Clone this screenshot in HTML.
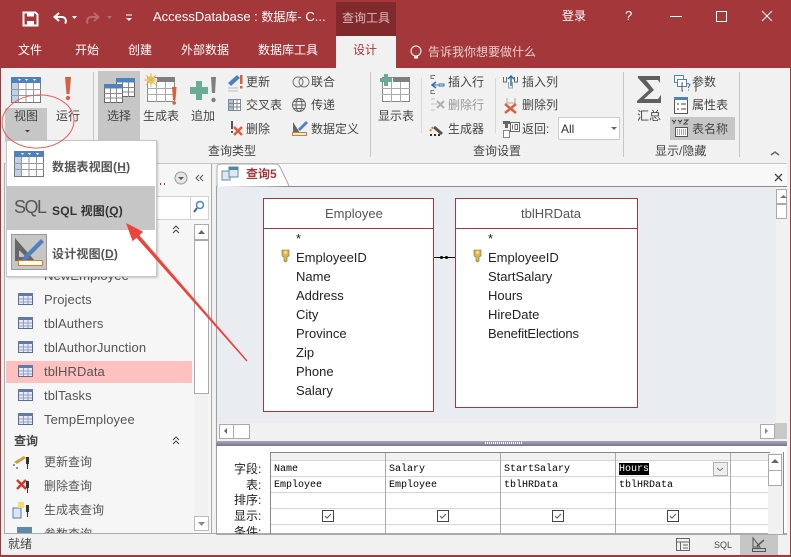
<!DOCTYPE html>
<html lang="zh"><head><meta charset="utf-8"><title>Access</title>
<style>
html,body{margin:0;padding:0}
body{width:791px;height:557px;overflow:hidden;position:relative;background:#f1f1f1;font-family:"Liberation Sans","Noto Sans CJK SC",sans-serif;font-size:12px;color:#444}
.r{position:absolute}
.t{position:absolute;white-space:nowrap;line-height:16px;font-size:12px;color:#444}
.w{color:#fff}
.f{font-size:13px;color:#222;line-height:19px}
.n{font-size:13px;color:#555;letter-spacing:.1px}
.m{font-family:"Liberation Mono",monospace;font-size:10px;color:#000;line-height:12px}
.g{color:#999}
svg{position:absolute;left:0;top:0}
</style></head><body>
<!-- title -->
<div class="r" style="left:0;top:0;width:791px;height:68px;background:#A4373A"></div>
<div class="r" style="left:336px;top:2px;width:60px;height:34px;background:#812A2D"></div>
<div class="r" style="left:336px;top:36px;width:60px;height:32px;background:#f1f1f1"></div>
<span class="t w" style="left:153px;top:9px;font-size:13px">AccessDatabase : <span style="font-size:12px">数据库</span>- C...</span>
<span class="t" style="left:342px;top:10px;color:#dcbcbc">查询工具</span>
<span class="t w" style="left:18px;top:42px">文件</span>
<span class="t w" style="left:75px;top:42px">开始</span>
<span class="t w" style="left:128px;top:42px">创建</span>
<span class="t w" style="left:181px;top:42px">外部数据</span>
<span class="t w" style="left:258px;top:42px">数据库工具</span>
<span class="t" style="left:353px;top:42px;color:#A4373A">设计</span>
<span class="t" style="left:428px;top:44px;color:#e6cfcf">告诉我你想要做什么</span>
<span class="t w" style="left:562px;top:8px">登录</span>
<span class="t w" style="left:625px;top:8px;font-size:13px">?</span>

<!-- ribbon highlights -->
<div class="r" style="left:5px;top:108px;width:42px;height:34px;background:#c6c6c6"></div>
<div class="r" style="left:98px;top:71px;width:42px;height:70px;background:#c6c6c6"></div>
<div class="r" style="left:670px;top:117px;width:65px;height:23px;background:#c6c6c6"></div>
<div class="r" style="left:93px;top:72px;width:1px;height:85px;background:#c6c6c6"></div>
<div class="r" style="left:370px;top:72px;width:1px;height:85px;background:#c6c6c6"></div>
<div class="r" style="left:623px;top:72px;width:1px;height:85px;background:#c6c6c6"></div>
<div class="r" style="left:739px;top:72px;width:1px;height:85px;background:#c6c6c6"></div>
<div class="r" style="left:421px;top:78px;width:1px;height:55px;background:#d8d8d8"></div>
<div class="r" style="left:495px;top:78px;width:1px;height:55px;background:#d8d8d8"></div>

<span class="t" style="left:14px;top:108px">视图</span>
<span class="t" style="left:56px;top:108px">运行</span>
<span class="t" style="left:107px;top:108px">选择</span>
<span class="t" style="left:143px;top:108px">生成表</span>
<span class="t" style="left:191px;top:108px">追加</span>
<span class="t" style="left:246px;top:74px">更新</span>
<span class="t" style="left:246px;top:97px">交叉表</span>
<span class="t" style="left:246px;top:121px">删除</span>
<span class="t" style="left:311px;top:74px">联合</span>
<span class="t" style="left:311px;top:97px">传递</span>
<span class="t" style="left:311px;top:121px">数据定义</span>
<span class="t" style="left:208px;top:143px">查询类型</span>
<span class="t" style="left:378px;top:108px">显示表</span>
<span class="t" style="left:448px;top:74px">插入行</span>
<span class="t g" style="left:448px;top:97px">删除行</span>
<span class="t" style="left:448px;top:121px">生成器</span>
<span class="t" style="left:522px;top:74px">插入列</span>
<span class="t" style="left:522px;top:97px">删除列</span>
<span class="t" style="left:522px;top:121px">返回:</span>
<div class="r" style="left:558px;top:117px;width:60px;height:21px;background:#fff;border:1px solid #ccc"></div>
<span class="t" style="left:561px;top:121px;font-size:12px;color:#333">All</span>
<span class="t" style="left:637px;top:108px">汇总</span>
<span class="t" style="left:692px;top:74px">参数</span>
<span class="t" style="left:692px;top:97px">属性表</span>
<span class="t" style="left:692px;top:121px">表名称</span>
<span class="t" style="left:473px;top:143px">查询设置</span>
<span class="t" style="left:655px;top:143px">显示/隐藏</span>

<!-- main regions -->
<div class="r" style="left:4px;top:163px;width:783px;height:1px;background:#c6c6c6"></div>
<div class="r" style="left:4px;top:164px;width:208px;height:369px;background:#f6f6f6;border-left:1px solid #aaa;border-right:1px solid #aaa;box-sizing:border-box"></div>
<div class="r" style="left:216px;top:164px;width:571px;height:23px;background:#f8f8f8"></div>
<div class="r" style="left:216px;top:186px;width:571px;height:1px;background:#8c8c8c"></div>
<div class="r" style="left:216px;top:187px;width:560px;height:236px;background:#E9EDF1"></div>
<div class="r" style="left:216px;top:187px;width:1px;height:347px;background:#a0a0a0"></div>
<div class="r" style="left:776px;top:187px;width:11px;height:236px;background:#f1f1f1"></div>
<div class="r" style="left:217px;top:423px;width:570px;height:18px;background:#f1f1f1"></div>
<div class="r" style="left:216px;top:441px;width:571px;height:5px;background:linear-gradient(#a9a6bf,#77748f)"></div>
<div class="r" style="left:217px;top:446px;width:570px;height:88px;background:#fff"></div>
<div class="r" style="left:216px;top:534px;width:571px;height:1px;background:#aaa"></div>
<div class="r" style="left:4px;top:533px;width:783px;height:1px;background:#aaa"></div>

<!-- nav -->
<div class="r" style="left:6px;top:361px;width:186px;height:22px;background:#FFC0C0"></div>
<div class="r" style="left:7px;top:196px;width:200px;height:22px;background:#fff;border:1px solid #d0d0d0"></div>
<div class="r" style="left:190px;top:197px;width:1px;height:22px;background:#d0d0d0"></div>
<div class="r" style="left:194px;top:224px;width:14px;height:306px;background:#f1f1f1"></div>
<div class="r" style="left:194px;top:224px;width:13px;height:168px;background:#fff;border:1px solid #aaa"></div>
<div class="r" style="left:195px;top:239px;width:13px;height:2px;background:#aaa"></div>
<div class="r" style="left:194px;top:516px;width:13px;height:13px;background:#fff;border:1px solid #bbb"></div>
<span class="t n" style="left:44px;top:268px">NewEmployee</span>
<span class="t n" style="left:44px;top:292px">Projects</span>
<span class="t n" style="left:44px;top:316px">tblAuthers</span>
<span class="t n" style="left:44px;top:340px">tblAuthorJunction</span>
<span class="t n" style="left:44px;top:364px">tblHRData</span>
<span class="t n" style="left:44px;top:388px">tblTasks</span>
<span class="t n" style="left:44px;top:412px">TempEmployee</span>
<span class="t" style="left:14px;top:433px;font-weight:bold">查询</span>
<span class="t" style="left:44px;top:454px;color:#555">更新查询</span>
<span class="t" style="left:44px;top:478px;color:#555">删除查询</span>
<span class="t" style="left:44px;top:502px;color:#555">生成表查询</span>
<div class="r" style="left:44px;top:526px;width:100px;height:7px;overflow:hidden"><span class="t" style="left:0;top:0;color:#555">参数查询</span></div>

<!-- tables -->
<div class="r" style="left:263px;top:198px;width:169px;height:212px;background:#fff;border:1px solid #A4373A"></div>
<div class="r" style="left:264px;top:228px;width:169px;height:1px;background:#A4373A"></div>
<div class="r" style="left:455px;top:198px;width:181px;height:208px;background:#fff;border:1px solid #A4373A"></div>
<div class="r" style="left:456px;top:228px;width:181px;height:1px;background:#A4373A"></div>
<div class="r" style="left:434px;top:257px;width:21px;height:1px;background:#000"></div>
<div class="r" style="left:440px;top:256px;width:3px;height:3px;background:#000;border-radius:2px"></div>
<div class="r" style="left:445px;top:256px;width:3px;height:3px;background:#000;border-radius:2px"></div>
<span class="t f" style="left:325px;top:204px;color:#555">Employee</span>
<span class="t f" style="left:521px;top:204px;color:#555">tblHRData</span>
<span class="t f" style="left:296px;top:229px">*</span>
<span class="t f" style="left:296px;top:248px">EmployeeID</span>
<span class="t f" style="left:296px;top:267px">Name</span>
<span class="t f" style="left:296px;top:286px">Address</span>
<span class="t f" style="left:296px;top:305px">City</span>
<span class="t f" style="left:296px;top:324px">Province</span>
<span class="t f" style="left:296px;top:343px">Zip</span>
<span class="t f" style="left:296px;top:362px">Phone</span>
<span class="t f" style="left:296px;top:381px">Salary</span>
<span class="t f" style="left:488px;top:229px">*</span>
<span class="t f" style="left:488px;top:248px">EmployeeID</span>
<span class="t f" style="left:488px;top:267px">StartSalary</span>
<span class="t f" style="left:488px;top:286px">Hours</span>
<span class="t f" style="left:488px;top:305px">HireDate</span>
<span class="t f" style="left:488px;top:324px;letter-spacing:-.15px">BenefitElections</span>

<!-- scrollbars -->
<div class="r" style="left:219px;top:424px;width:13px;height:13px;background:#fff;border:1px solid #aaa"></div>
<div class="r" style="left:233px;top:424px;width:15px;height:13px;background:#fff;border:1px solid #aaa"></div>
<div class="r" style="left:760px;top:424px;width:13px;height:13px;background:#fff;border:1px solid #aaa"></div>
<div class="r" style="left:775px;top:423px;width:12px;height:16px;background:#c8c8c8"></div>
<div class="r" style="left:776px;top:189px;width:11px;height:30px;background:#fff;border:1px solid #aaa;box-sizing:border-box"></div>
<div class="r" style="left:776px;top:203px;width:11px;height:2px;background:#aaa"></div>

<!-- grid -->
<div class="r" style="left:270px;top:452px;width:500px;height:82px;border-left:1px solid #888;border-top:1px solid #888;border-right:1px solid #888;box-sizing:border-box"></div>
<div class="r" style="left:271px;top:453px;width:498px;height:7px;background:#f1f1f1"></div>
<div class="r" style="left:271px;top:460px;width:498px;height:1px;background:#cdd6e6"></div>
<div class="r" style="left:271px;top:476px;width:498px;height:1px;background:#cdd6e6"></div>
<div class="r" style="left:271px;top:492px;width:498px;height:1px;background:#cdd6e6"></div>
<div class="r" style="left:271px;top:508px;width:498px;height:1px;background:#cdd6e6"></div>
<div class="r" style="left:271px;top:524px;width:498px;height:1px;background:#cdd6e6"></div>
<div class="r" style="left:385px;top:453px;width:1px;height:81px;background:#aaa"></div>
<div class="r" style="left:500px;top:453px;width:1px;height:81px;background:#aaa"></div>
<div class="r" style="left:615px;top:453px;width:1px;height:81px;background:#aaa"></div>
<div class="r" style="left:730px;top:453px;width:1px;height:81px;background:#aaa"></div>
<div class="r" style="left:768px;top:453px;width:15px;height:81px;background:#f1f1f1"></div>
<div class="r" style="left:768px;top:454px;width:14px;height:32px;background:#fff;border:1px solid #aaa;box-sizing:border-box"></div>
<div class="r" style="left:768px;top:470px;width:14px;height:1px;background:#aaa"></div>
<div class="r" style="left:783px;top:452px;width:1px;height:82px;background:#888"></div>
<div class="r" style="left:619px;top:463px;width:30px;height:12px;background:#000"></div>
<div class="r" style="left:713px;top:462px;width:15px;height:14px;background:#eee;border:1px solid #b0b0b0;box-sizing:border-box"></div>
<span class="t" style="left:234px;top:461px;color:#222">字段:</span>
<span class="t" style="left:246px;top:477px;color:#222">表:</span>
<span class="t" style="left:234px;top:492px;color:#222">排序:</span>
<span class="t" style="left:234px;top:508px;color:#222">显示:</span>
<div class="r" style="left:234px;top:524px;width:36px;height:10px;overflow:hidden"><span class="t" style="left:0;top:0;color:#222">条件:</span></div>
<span class="t m" style="left:274px;top:464px">Name</span>
<span class="t m" style="left:389px;top:464px">Salary</span>
<span class="t m" style="left:504px;top:464px">StartSalary</span>
<span class="t m" style="left:619px;top:464px;color:#fff">Hours</span>
<span class="t m" style="left:274px;top:480px">Employee</span>
<span class="t m" style="left:389px;top:480px">Employee</span>
<span class="t m" style="left:504px;top:480px">tblHRData</span>
<span class="t m" style="left:619px;top:480px">tblHRData</span>

<!-- status -->
<div class="r" style="left:740px;top:535px;width:38px;height:20px;background:#c6c6c6"></div>
<span class="t" style="left:8px;top:536px">就绪</span>
<span class="t" style="left:714px;top:537px;font-size:9px;color:#444">SQL</span>

<!-- window border -->
<div class="r" style="left:0;top:68px;width:1px;height:489px;background:#A4373A"></div>
<div class="r" style="left:790px;top:68px;width:1px;height:489px;background:#A4373A"></div>
<div class="r" style="left:0;top:555px;width:791px;height:2px;background:#A4373A"></div>

<!-- icons -->
<svg width="791" height="557" viewBox="0 0 791 557">
<defs>
<g id="tb">
<rect x=".5" y=".5" width="29" height="25" fill="#fff" stroke="#777"/>
<rect x="0" y="0" width="30" height="6" fill="#4F81BD"/>
<rect x="1" y="6" width="6" height="19" fill="#bdd2e8"/>
<path d="M0 12.500H30M0 18.500H30M7.500 6V25M15 6V25M22.500 6V25" stroke="#999" fill="none"/>
<path d="M7 2h3l-1.500 2zM14 2h3l-1.500 2zM22 2h3l-1.500 2z" fill="#fff"/>
</g>
<g id="ts">
<rect x=".5" y=".5" width="18" height="18" fill="#fff" stroke="#666"/>
<rect x="0" y="0" width="19" height="4.500" fill="#4F81BD"/>
<path d="M0 9.500H19M0 14H19M6.500 4V19M12.500 4V19" stroke="#888" fill="none"/>
</g>
<g id="ti">
<rect x=".5" y=".5" width="14" height="11" fill="#e6ebf5" stroke="#5a6c96"/>
<rect x="0" y="0" width="15" height="3" fill="#5f79ab"/>
<path d="M1 6H14M1 9H14M5.500 3V11M10 3V11" stroke="#8ea2c8" fill="none"/>
</g>
<g id="gt">
<rect x=".5" y=".5" width="27" height="24" fill="#fff" stroke="#888"/>
<path d="M0 11.500H28M0 17.500H28M9.500 5V25M18.500 5V25" stroke="#aaa" fill="none"/>
</g>
<g id="cb"><rect x=".5" y=".5" width="11" height="11" fill="#fff" stroke="#444"/><path d="M3 6l2 2 4-4" stroke="#666" fill="none" stroke-width="1.200"/></g>
<g id="ky"><path d="M0 0h7v6l-2 1v4l-1.500 1-1.500-1V7L0 6z" fill="#d8b94a" stroke="#7a6a20" stroke-width=".6"/><rect x="2.500" y="1.500" width="2" height="2" fill="#fff"/></g>
</defs>

<!-- QAT -->
<path d="M23.500 12.500h12l2 2v11h-14z" fill="none" stroke="#fff" stroke-width="2"/>
<rect x="27" y="12" width="7" height="4.500" fill="#fff"/><rect x="27" y="21" width="7" height="4" fill="#fff"/>
<path d="M59 13l-4.500 4 4.500 4M55 17h7a4 4 0 0 1 3 6.500" fill="none" stroke="#fff" stroke-width="2"/>
<path d="M72 16h5l-2.500 3z" fill="#fff"/>
<path d="M94 13l4.500 4-4.500 4M98 17h-7a4 4 0 0 0-3 6.500" fill="none" stroke="#b96a6c" stroke-width="2"/>
<path d="M107 16h5l-2.500 3z" fill="#b96a6c"/>
<path d="M126 15h6" stroke="#fff"/><path d="M126 18h6l-3 3z" fill="#fff"/>
<!-- window ctrl -->
<path d="M670 16.500h12" stroke="#fff"/>
<rect x="716.500" y="11.500" width="10" height="10" fill="none" stroke="#fff"/>
<path d="M762 11l10 10M772 11l-10 10" stroke="#fff"/>
<circle cx="416" cy="51" r="5" fill="none" stroke="#fff"/><path d="M414 56.500h4v2h-4z" fill="#fff"/>

<!-- ribbon large -->
<use href="#tb" x="11" y="77"/>
<path d="M65 77h6l-1.500 17h-3z" fill="#D9603F"/><circle cx="68" cy="98" r="2.200" fill="#D9603F"/>
<path d="M25 130h5l-2.500 2.500z" fill="#444"/>
<use href="#ts" x="116" y="78"/>
<use href="#ts" x="104" y="84"/>
<use href="#gt" x="147" y="77"/><rect x="157" y="77" width="18" height="5" fill="#7f7f7f"/>
<circle cx="151" cy="80" r="4" fill="#f0d070"/><path d="M146 75l10 10M156 75l-10 10M151 73v14M144 80h14" stroke="#e3b65a"/>
<path d="M172 87h4.500l-1 13h-2.500z" fill="#D9603F"/><circle cx="174.200" cy="103" r="1.800" fill="#D9603F"/>
<path d="M196 81h6v6h6v7h-6v6h-6v-6h-6v-7h6z" fill="#6AAB93"/>
<path d="M211 77h5l-1 16h-3z" fill="#7f7f7f"/><circle cx="213.500" cy="100" r="2.200" fill="#7f7f7f"/>
<use href="#gt" x="382" y="77"/><rect x="393" y="77" width="17" height="5" fill="#7f7f7f"/>
<path d="M384 74h4v4h4v4h-4v4h-4v-4h-4v-4h4z" fill="#6AAB93"/>
<!-- small query icons -->
<path d="M228 83l9-8 3 3-9 8z" fill="#4F81BD"/><path d="M228 88h10M228 91h10" stroke="#bbb"/>
<rect x="240" y="75" width="2.500" height="9" fill="#D9603F"/><rect x="240" y="86" width="2.500" height="2.500" fill="#D9603F"/>
<rect x="228.500" y="99.500" width="12" height="11" fill="#fff" stroke="#7a8ba0"/><rect x="229" y="100" width="4" height="10" fill="#a9bdd6"/><path d="M229 103.500h11M229 107h11M233.500 100v10M237 100v10" stroke="#888"/>
<rect x="231" y="121" width="2" height="8" fill="#555"/><rect x="231" y="131" width="2" height="2" fill="#555"/>
<path d="M234 127l8 8M242 127l-8 8" stroke="#D9603F" stroke-width="2.500"/>
<circle cx="298" cy="82" r="5" fill="none" stroke="#777"/><circle cx="304" cy="82" r="5" fill="none" stroke="#777"/>
<circle cx="299" cy="105" r="6.500" fill="none" stroke="#666"/><ellipse cx="299" cy="105" rx="3" ry="6.500" fill="none" stroke="#666"/><path d="M292.500 105h13M293.500 101.500h11M293.500 108.500h11" stroke="#666"/>
<path d="M293 122v11h7z" fill="#666"/><path d="M298 129l8-8 2 2-8 8z" fill="#4F81BD"/><rect x="292.500" y="132.500" width="14" height="3" fill="none" stroke="#E07B20"/>
<!-- query settings -->
<path d="M436 82l-4 3 4 3" stroke="#2f6ea8" fill="none" stroke-width="1.500"/><path d="M432 85h6M439 84h5v2h-5z" stroke="#2f6ea8" fill="none"/><path d="M435 75.500h-4v3h3M435 93.500h-4v-3h3" stroke="#777" fill="none"/>
<path d="M431 104h6M431 99h4M431 110h4" stroke="#c2c2c2" fill="none"/><path d="M437 101l7 7M444 101l-7 7" stroke="#b0b0b0" stroke-width="2"/>
<path d="M434 127l8 7" stroke="#555" stroke-width="3"/><path d="M433 127l-3 4" stroke="#e3833a" stroke-width="2" stroke-dasharray="2 1"/><path d="M430 135h2M434 135h2M438 135h2" stroke="#333" stroke-width="2"/>
<path d="M503.500 77v5h3v-5M517.500 77v5h-3v-5" stroke="#666" fill="none"/><path d="M511 86v-9M508 79l3-3 3 3" stroke="#2f6ea8" fill="none" stroke-width="1.500"/><path d="M508.500 82v6h4v-6" stroke="#8aa" fill="none"/>
<path d="M507 98v5h8v-5" stroke="#aaa" fill="none"/><path d="M505 104l11 9M516 104l-11 9" stroke="#D9603F" stroke-width="2.500"/>
<path d="M503 121h7v3h-2v4h-3v-4h-2z" fill="#666"/><rect x="503.500" y="130.500" width="6" height="7" fill="#fff" stroke="#888"/><rect x="510.500" y="122.500" width="9" height="9" fill="#fff" stroke="#666"/><path d="M512.500 124.500v5M515 124.500h2.500v5H515z" stroke="#333" fill="none" stroke-width=".7"/>
<path d="M611 127h6l-3 3z" fill="#666"/>
<path d="M638 76H660V83L658 80H646L654 90L644 99H658L661 95V103H637V101L649 90L638 78Z" fill="#5f5f5f"/>
<rect x="674.500" y="75.500" width="9" height="7" fill="#fff" stroke="#4F81BD"/><rect x="677.500" y="79.500" width="9" height="7" fill="#fff" stroke="#4F81BD"/><path d="M683 83h-1v8h1M695 83h1v8h-1" stroke="#555" fill="none"/><path d="M687 84a2 2 0 0 1 3 1l-1.500 2v1M688.500 89.500v1" stroke="#2f6ea8" fill="none"/>
<rect x="674.500" y="98.500" width="13" height="15" fill="#fff" stroke="#555"/><rect x="674" y="97" width="14" height="3" fill="#4F81BD"/><path d="M677 104h2M677 109h2M681 104h5M681 109h5" stroke="#444"/>
<path d="M672 120l2 2 2-2M674 122v2M678 120l2 2 2-2M680 122v2M684 120h4l-4 4h4" stroke="#444" fill="none"/>
<rect x="675.500" y="127.500" width="12" height="9" fill="#fff" stroke="#555"/><path d="M677 130h9M677 132h9M677 134h9" stroke="#555" stroke-dasharray="1 1"/>
<path d="M771 155l4-3 4 3" stroke="#666" stroke-width="1.500" fill="none"/>

<!-- nav -->
<path d="M156 184h1M160 184h1M164 184h1" stroke="#A4373A" stroke-width="2"/>
<circle cx="181" cy="178" r="6" fill="#e4e4e4" stroke="#999"/><path d="M178 177h6l-3 3z" fill="#555"/>
<path d="M199 175l-3 3 3 3M203 175l-3 3 3 3" stroke="#555" fill="none"/>
<circle cx="200" cy="205" r="3.500" fill="#fff" stroke="#4F81BD" stroke-width="1.500"/><path d="M197 208l-3 4" stroke="#2f6ea8" stroke-width="2"/>
<path d="M173 229l3-3 3 3M173 233l3-3 3 3" stroke="#444" fill="none"/>
<path d="M173 440l3-3 3 3M173 444l3-3 3 3" stroke="#444" fill="none"/>
<path d="M198 234h7l-3.500-4z" fill="#666"/>
<path d="M198 522h7l-3.500 4z" fill="#888"/>
<use href="#ti" x="18" y="293"/><use href="#ti" x="18" y="317"/><use href="#ti" x="18" y="341"/><use href="#ti" x="18" y="365"/><use href="#ti" x="18" y="389"/><use href="#ti" x="18" y="413"/>
<path d="M14 462l10-6 2 2-9 6z" fill="#c9a040"/><path d="M13 465h2M16 468h2" stroke="#333"/>
<path d="M17 480l9 9M26 480l-9 9" stroke="#d8382a" stroke-width="2.500"/>
<rect x="13" y="508" width="8" height="10" fill="#dbe6f5" stroke="#5a79a8"/><rect x="18" y="502" width="6" height="6" fill="#f2dc6a"/>
<g fill="#333"><rect x="26" y="457" width="3" height="7"/><rect x="26" y="481" width="3" height="7"/><rect x="26" y="505" width="3" height="7"/><rect x="27" y="464" width="1" height="5"/><rect x="27" y="488" width="1" height="5"/><rect x="27" y="512" width="1" height="5"/></g>
<rect x="17" y="527" width="15" height="6" fill="#5f8aa8"/>

<!-- query tab -->
<path d="M217 187v-20q0-3 4-3h54q4 0 6 5l8 17" fill="#fff" stroke="#a8a8a8"/>
<rect x="222" y="171" width="8" height="9" fill="#dfe8f2" stroke="#5f8aa8"/><rect x="229" y="167" width="9" height="10" fill="#dfe8f2" stroke="#5f8aa8"/><rect x="229" y="167" width="9" height="3" fill="#4c8a9c"/>
<path d="M775 174l7 7M782 174l-7 7" stroke="#444" stroke-width="1.300"/>
<path d="M780 198h7l-3.500-3z" fill="#777"/>
<use href="#ky" x="282" y="250"/><use href="#ky" x="474" y="250"/>
<path d="M227 428v6l-3-3z" fill="#666"/><path d="M765 428v6l3-3z" fill="#888"/>
<path d="M485 443h37" stroke="#fff" stroke-dasharray="1 1" stroke-width="2"/>
<path d="M771 463h8l-4-4z" fill="#666"/>
<path d="M717 468l3 2.500 3-2.500" stroke="#777" fill="none"/>
<use href="#cb" x="322" y="510"/><use href="#cb" x="437" y="510"/><use href="#cb" x="552" y="510"/><use href="#cb" x="667" y="510"/>
<!-- status icons -->
<rect x="676.500" y="538.500" width="13" height="12" fill="none" stroke="#666"/><path d="M676 542h14M680.500 542v9M683 545h5M683 548h5" stroke="#666"/>
<path d="M753 538v9h7z" fill="none" stroke="#555"/><path d="M757 546l7-6" stroke="#555" stroke-width="1.500"/><rect x="752.500" y="548.500" width="13" height="3" fill="none" stroke="#555"/>
</svg>

<span class="t" style="left:246px;top:166px;color:#A4373A;font-weight:bold">查询5</span>

<!-- popup -->
<div class="r" style="left:6px;top:140px;width:149px;height:135px;background:#fff;border:1px solid #c6c6c6;box-shadow:1px 1px 2px rgba(0,0,0,.2)"></div>
<div class="r" style="left:7px;top:186px;width:148px;height:44px;background:#c6c6c6"></div>
<div class="r" style="left:11px;top:234px;width:36px;height:36px;background:#c6c6c6;border:1px solid #999;box-sizing:border-box"></div>
<span class="t" style="left:52px;top:159px;font-size:12px;font-weight:bold;color:#555;letter-spacing:.2px">数据表视图(<u>H</u>)</span>
<span class="t" style="left:52px;top:203px;font-size:12px;font-weight:bold;color:#333;letter-spacing:.2px">SQL 视图(<u>Q</u>)</span>
<span class="t" style="left:52px;top:246px;font-size:12px;font-weight:bold;color:#555;letter-spacing:.2px">设计视图(<u>D</u>)</span>
<span class="t" style="left:14px;top:195px;font-size:18px;line-height:24px;color:#555;letter-spacing:-1.500px">SQL</span>
<svg width="791" height="557" viewBox="0 0 791 557" style="pointer-events:none">
<use href="#tb" x="14" y="151"/>
<path d="M15 238v23h20z" fill="#666"/><path d="M19 250v7h7z" fill="#c6c6c6"/>
<path d="M24 256l17-17 3 3-17 17-5 2z" fill="#4F81BD"/>
<rect x="18.500" y="260.500" width="24" height="5" fill="#fff" stroke="#E07B20"/>
<ellipse cx="38" cy="121.500" rx="36" ry="26.500" fill="none" stroke="#EE5A5A" transform="rotate(-4 38 121)"/>
<path d="M126 223L143.200 231.900L139.300 235.300L247.500 360.500L246.500 361.500L136.500 237.700L132.600 241.100Z" fill="#F0413A"/>
</svg>
</body></html>
